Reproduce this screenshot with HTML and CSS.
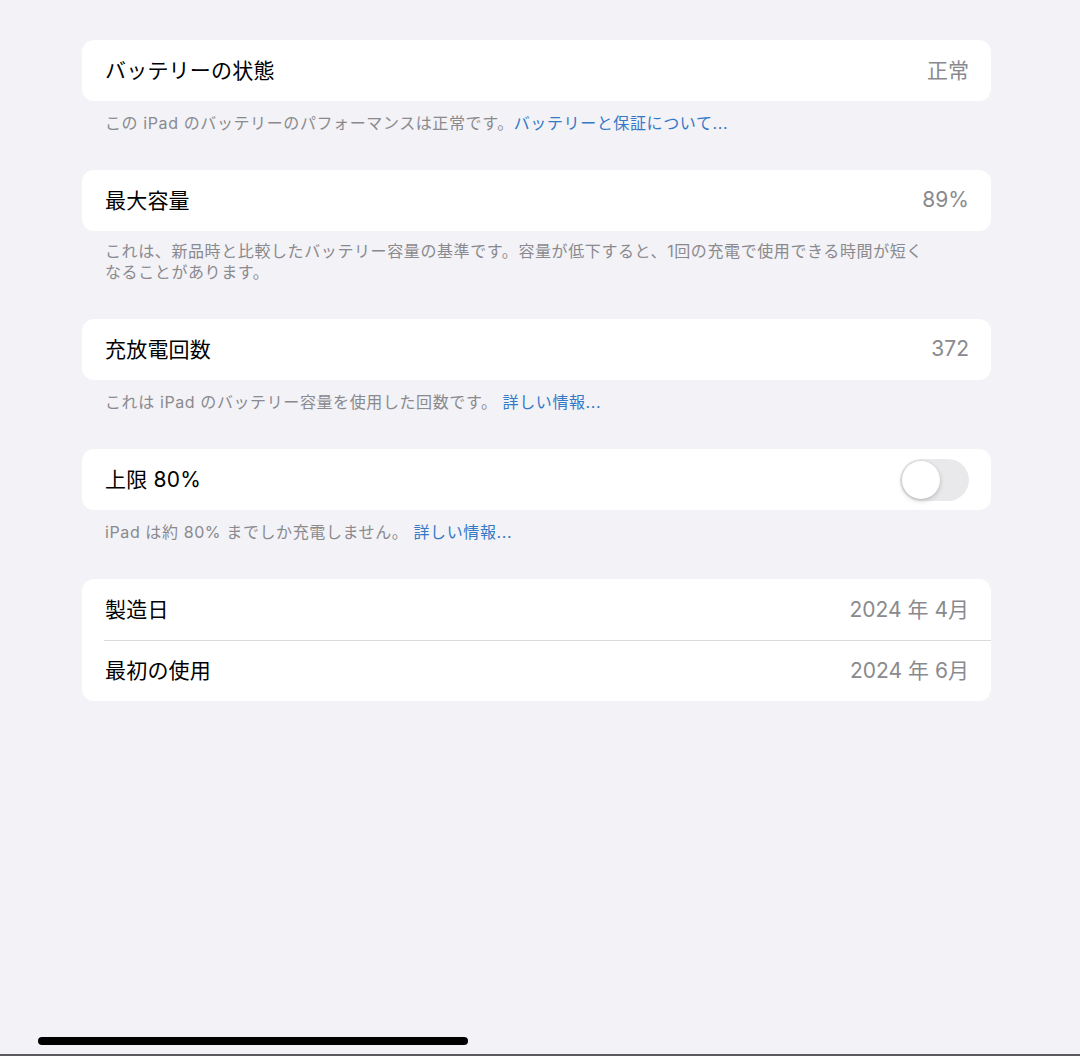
FILE: index.html
```html
<!DOCTYPE html>
<html lang="ja">
<head>
    <meta charset="UTF-8">
    <meta name="viewport" content="width=device-width, initial-scale=1.0">
    <title>バッテリーの状態と充電</title>
    <link rel="stylesheet" href="styles.css">
</head>
<body>
    <div class="page">
        <div class="group">
            <div class="card">
                <div class="row">
                    <span class="label">バッテリーの状態</span>
                    <span class="value">正常</span>
                </div>
            </div>
            <p class="note">この iPad のバッテリーのパフォーマンスは正常です。<a class="link">バッテリーと保証について...</a></p>
        </div>

        <div class="group">
            <div class="card">
                <div class="row">
                    <span class="label">最大容量</span>
                    <span class="value">89%</span>
                </div>
            </div>
            <p class="note note-long">これは、新品時と比較したバッテリー容量の基準です。容量が低下すると、1回の充電で使用できる時間が短くなることがあります。</p>
        </div>

        <div class="group">
            <div class="card">
                <div class="row">
                    <span class="label">充放電回数</span>
                    <span class="value">372</span>
                </div>
            </div>
            <p class="note">これは iPad のバッテリー容量を使用した回数です。 <a class="link">詳しい情報...</a></p>
        </div>

        <div class="group">
            <div class="card">
                <div class="row">
                    <span class="label">上限 80%</span>
                    <span class="switch"><span class="knob"></span></span>
                </div>
            </div>
            <p class="note">iPad は約 80% までしか充電しません。 <a class="link">詳しい情報...</a></p>
        </div>

        <div class="group">
            <div class="card">
                <div class="row">
                    <span class="label">製造日</span>
                    <span class="value">2024 年 4月</span>
                </div>
                <div class="row">
                    <span class="label">最初の使用</span>
                    <span class="value">2024 年 6月</span>
                </div>
            </div>
        </div>
    </div>

    <div class="home-bar"></div>
</body>
</html>
```

FILE: styles.css
```css
html, body {
    height: 100%;
}

body {
    margin: 0;
    font-family: Inter, "Noto Sans CJK JP", sans-serif;
    background-color: #f2f2f7;
    color: #000;
    display: flex;
    flex-direction: column;
    border-bottom: 2px solid #5a5a5e;
    box-sizing: border-box;
}

.page {
    width: 909px;
    margin: 40px 0 0 82px;
}

.group {
    margin-bottom: 36px;
}

.card {
    background-color: #fff;
    border-radius: 12px;
    overflow: hidden;
}

.row {
    height: 61px;
    display: flex;
    align-items: center;
    justify-content: space-between;
    padding: 0 22px 3px 23px;
    box-sizing: border-box;
    position: relative;
}

.row + .row::before {
    content: "";
    position: absolute;
    top: 0;
    left: 22px;
    right: 0;
    height: 1px;
    background-color: #d9d9de;
}

.label {
    font-size: 21px;
    letter-spacing: 0.2px;
}

.value {
    font-size: 21px;
    color: #8a8a8e;
}

.note {
    margin: 0;
    padding: 11px 60px 0 23px;
    font-size: 16px;
    line-height: 22px;
    letter-spacing: 0.6px;
    color: #8a8a8e;
}

.note-long {
    padding-top: 10px;
    line-height: 21px;
}

.link {
    color: #3479c6;
}

.switch {
    width: 69px;
    height: 42px;
    margin-top: 3px;
    border-radius: 21px;
    background-color: #e9e9eb;
    display: flex;
    align-items: center;
    padding: 2px;
    box-sizing: border-box;
}

.knob {
    width: 38px;
    height: 38px;
    border-radius: 50%;
    background-color: #fff;
    box-shadow: 0 2px 5px rgba(0, 0, 0, 0.18), 0 0 0 0.5px rgba(0, 0, 0, 0.06);
}

.home-bar {
    margin: auto 0 9px 38px;
    width: 430px;
    height: 8px;
    border-radius: 4px;
    background-color: #000;
}
```
